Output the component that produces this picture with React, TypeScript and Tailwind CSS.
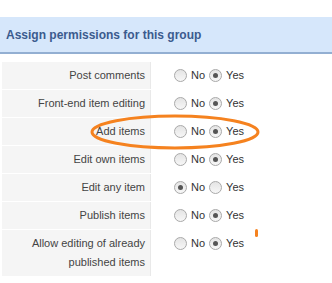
const ROWS = [
  { label: ['Post comments'], yes: true },
  { label: ['Front-end item editing'], yes: true },
  { label: ['Add items'], yes: true },
  { label: ['Edit own items'], yes: true },
  { label: ['Edit any item'], yes: false },
  { label: ['Publish items'], yes: true },
  { label: ['Allow editing of already', 'published items'], yes: true },
]

function Radio({ checked }: { checked: boolean }) {
  return (
    <span className="w-[13px] h-[13px] rounded-full border border-[#a9a9a9] bg-gradient-to-b from-[#e4e4e4] to-[#f7f7f7] flex items-center justify-center shrink-0">
      {checked && <span className="w-[5px] h-[5px] rounded-full bg-[#555]" />}
    </span>
  )
}

export default function App() {
  return (
    <div className="relative w-[332px] h-[283px] bg-white pt-[17px] font-['Liberation_Sans',Arial,sans-serif] overflow-hidden">
      <div className="h-[37px] bg-[#d6e7fb] border-b-2 border-[#93afd2] flex items-center px-[6px]">
        <h2 className="text-[12px] font-bold text-[#3b5b8e]">Assign permissions for this group</h2>
      </div>

      <div className="mt-[8px] ml-[2px] flex flex-col">
        {ROWS.map((row, i) => (
          <div key={i} className="flex border-b border-white">
            <div className="w-[149px] bg-[#f5f5f5] border-r border-[#e9e9e9] py-[4px] pr-[5px] text-right text-[11px] leading-[19px] text-[#444]">
              {row.label.map(l => <div key={l}>{l}</div>)}
            </div>
            <div className="pl-[23px] h-[27px] flex items-center gap-[4px] text-[11px] text-[#333]">
              <Radio checked={!row.yes} />
              <span>No</span>
              <Radio checked={row.yes} />
              <span>Yes</span>
            </div>
          </div>
        ))}
      </div>

      {/* annotation */}
      <svg className="absolute left-[89px] top-[113px]" width="172" height="38">
        <ellipse cx="86" cy="19" rx="83" ry="16" fill="none" stroke="#f5821f" strokeWidth="3" />
      </svg>
      <span className="absolute left-[255px] top-[229px] w-[3px] h-[8px] rounded-full bg-[#f5821f]" />
    </div>
  )
}
